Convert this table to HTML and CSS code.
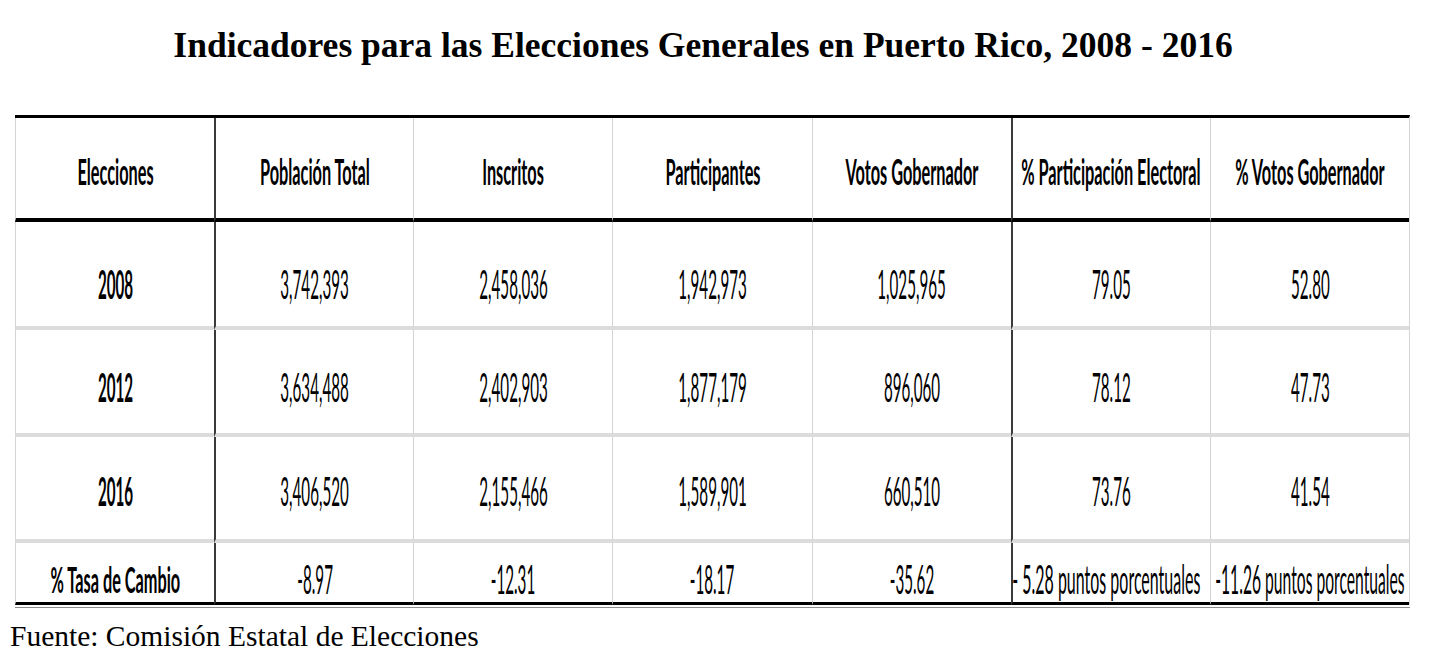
FILE: index.html
```html
<!DOCTYPE html>
<html lang="es">
<head>
<meta charset="utf-8">
<title>Indicadores para las Elecciones Generales en Puerto Rico, 2008 - 2016</title>
<link rel="stylesheet" href="styles.css">
</head>
<body>
<h1 class="title">Indicadores para las Elecciones Generales en Puerto Rico, 2008 - 2016</h1>
<div class="tablewrap">
<table class="data">
<colgroup><col><col><col><col><col><col><col></colgroup>
<thead>
<tr class="head">
<th><div class="c"><span class="t hb">Elecciones</span></div></th>
<th class="dark"><div class="c"><span class="t hb">Población Total</span></div></th>
<th><div class="c"><span class="t hb">Inscritos</span></div></th>
<th><div class="c"><span class="t hb">Participantes</span></div></th>
<th><div class="c"><span class="t hb">Votos Gobernador</span></div></th>
<th class="dark"><div class="c"><span class="t hb">% Participación Electoral</span></div></th>
<th><div class="c"><span class="t hb">% Votos Gobernador</span></div></th>
</tr>
</thead>
<tbody>
<tr class="r1">
<td><div class="c"><span class="t yb">2008</span></div></td>
<td class="dark"><div class="c"><span class="t n">3,742,393</span></div></td>
<td><div class="c"><span class="t n">2,458,036</span></div></td>
<td><div class="c"><span class="t n">1,942,973</span></div></td>
<td><div class="c"><span class="t n">1,025,965</span></div></td>
<td class="dark"><div class="c"><span class="t n">79.05</span></div></td>
<td><div class="c"><span class="t n">52.80</span></div></td>
</tr>
<tr class="r2">
<td><div class="c"><span class="t yb">2012</span></div></td>
<td class="dark"><div class="c"><span class="t n">3,634,488</span></div></td>
<td><div class="c"><span class="t n">2,402,903</span></div></td>
<td><div class="c"><span class="t n">1,877,179</span></div></td>
<td><div class="c"><span class="t n">896,060</span></div></td>
<td class="dark"><div class="c"><span class="t n">78.12</span></div></td>
<td><div class="c"><span class="t n">47.73</span></div></td>
</tr>
<tr class="r3">
<td><div class="c"><span class="t yb">2016</span></div></td>
<td class="dark"><div class="c"><span class="t n">3,406,520</span></div></td>
<td><div class="c"><span class="t n">2,155,466</span></div></td>
<td><div class="c"><span class="t n">1,589,901</span></div></td>
<td><div class="c"><span class="t n">660,510</span></div></td>
<td class="dark"><div class="c"><span class="t n">73.76</span></div></td>
<td><div class="c"><span class="t n">41.54</span></div></td>
</tr>
<tr class="r4">
<td><div class="c"><span class="t hb">% Tasa de Cambio</span></div></td>
<td class="dark"><div class="c"><span class="t n">-8.97</span></div></td>
<td><div class="c"><span class="t n">-12.31</span></div></td>
<td><div class="c"><span class="t n">-18.17</span></div></td>
<td><div class="c"><span class="t n">-35.62</span></div></td>
<td class="dark"><div class="c"><span class="t n w1">- 5.28 puntos porcentuales</span></div></td>
<td><div class="c"><span class="t n w2">-11.26 puntos porcentuales</span></div></td>
</tr>
</tbody>
</table>
</div>
<p class="source">Fuente: Comisión Estatal de Elecciones</p>
</body>
</html>
```
FILE: styles.css
```css
html, body {
  margin: 0;
  padding: 0;
  background: #ffffff;
}

body {
  width: 1430px;
  height: 658px;
  overflow: hidden;
  color: #000000;
}

.title {
  margin: 0;
  padding: 25px 24px 0 0;
  font-family: "Liberation Serif", "Times New Roman", serif;
  font-weight: bold;
  font-size: 35.5px;
  line-height: 40px;
  text-align: center;
}

.tablewrap {
  margin: 50px 0 0 15px;
  width: 1395px;
  border-bottom: 1px solid #8c8c8c;
  padding-bottom: 2px;
}

.data {
  width: 1395px;
  table-layout: fixed;
  border-spacing: 0;
  border-top: 3px solid #000000;
  border-right: 1px solid #d4d4d4;
}

.data th,
.data td {
  box-sizing: border-box;
  padding: 0;
  border-left: 1px solid #d4d4d4;
  border-bottom: 4px solid #dcdcdc;
  vertical-align: middle;
  font-weight: normal;
}

.data th {
  border-bottom: 4px solid #000000;
  height: 104px;
  padding-top: 5px;
}

.data .dark {
  border-left: 2px solid #3a3a3a;
}

.r1 td { height: 108px; padding-top: 19px; }
.r2 td { height: 107px; padding-top: 10px; }
.r3 td { height: 106px; padding-top: 4px; }
.r4 td {
  height: 62px;
  padding-top: 12px;
  border-bottom: 3px solid #000000;
}

.c {
  display: flex;
  justify-content: center;
  white-space: nowrap;
}

.t {
  display: inline-block;
  font-family: Lato, "Open Sans", sans-serif;
  line-height: 1;
  white-space: nowrap;
}

.hb {
  font-weight: bold;
  font-size: 37px;
  transform: scaleX(0.44);
}

.yb {
  font-weight: bold;
  font-size: 41px;
  transform: scaleX(0.37);
}

.n {
  font-weight: normal;
  font-size: 41px;
  transform: scaleX(0.37);
}

.n.w1 {
  transform: translateX(-5px) scaleX(0.39);
}

.n.w2 {
  transform: scaleX(0.382);
}

.source {
  margin: 13px 0 0 10px;
  font-family: "Liberation Serif", "Times New Roman", serif;
  font-size: 29.5px;
  line-height: 30px;
}
```
